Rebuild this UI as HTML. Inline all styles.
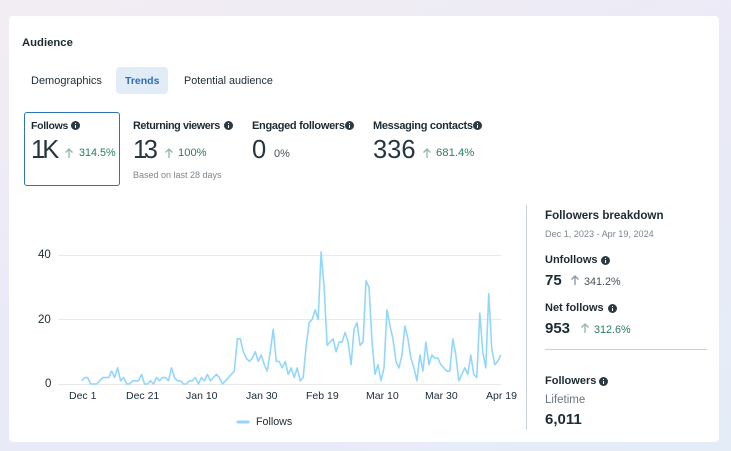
<!DOCTYPE html>
<html lang="en">
<head>
<meta charset="utf-8">
<title>Audience</title>
<style>
html,body{margin:0;padding:0}
body{width:731px;height:451px;overflow:hidden;position:relative;background:linear-gradient(160deg,#f3edf3 0%,#eaeaf6 45%,#e4ecf8 100%);font-family:"Liberation Sans",sans-serif;color:#1c2b33}
#card{position:absolute;left:9px;top:16px;width:710px;height:426px;background:#fff;border-radius:4px}
.t{position:absolute;white-space:nowrap;line-height:1}
.b{font-weight:700}
.h{font-size:11px;letter-spacing:-.3px;font-weight:700}
.n{font-size:25.5px;color:#263640}
.x{font-size:10.5px}
.i{position:absolute;width:9px;height:9px;border-radius:50%;background:#2b3a44}
.i:before{content:"";position:absolute;left:4px;top:4px;width:1.4px;height:3.4px;background:#fff}
.i:after{content:"";position:absolute;left:4px;top:2px;width:1.4px;height:1.2px;background:#fff}
.g{color:#2a7a66}
svg{position:absolute}
</style>
</head>
<body>
<div id="card"></div>

<div class="t b" style="left:22px;top:38px;font-size:11.3px">Audience</div>

<div style="position:absolute;left:116px;top:67px;width:52px;height:27px;background:#e2ecf7;border-radius:4px"></div>
<div class="t" style="left:31px;top:76px;font-size:11px">Demographics</div>
<div class="t b" style="left:125px;top:76px;font-size:10.5px;color:#2f6cb8">Trends</div>
<div class="t" style="left:184px;top:76px;font-size:10.8px">Potential audience</div>

<div style="position:absolute;left:24px;top:112px;width:94px;height:72px;border:1.5px solid #2f74b9;border-radius:3px;box-sizing:content-box"></div>

<div class="t h" style="left:31px;top:121px;font-size:10.5px">Follows</div><span class="i" style="left:71px;top:121px"></span>
<div class="t n" style="left:31px;top:138px"><span style="letter-spacing:-3px">1</span>K</div>
<svg style="left:63px;top:147px" width="12" height="12" viewBox="0 0 12 12"><path d="M6 11V2M2.5 5.5L6 2l3.5 3.5" fill="none" stroke="#8fb5a9" stroke-width="1.3"/></svg>
<div class="t g" style="left:79px;top:148px;font-size:10.8px">314.5%</div>

<div class="t h" style="left:133px;top:121px;font-size:10.8px;letter-spacing:-.4px">Returning viewers</div><span class="i" style="left:224px;top:121px"></span>
<div class="t n" style="left:133px;top:138px"><span style="letter-spacing:-3.5px">1</span>3</div>
<svg style="left:163px;top:147px" width="12" height="12" viewBox="0 0 12 12"><path d="M6 11V2M2.5 5.5L6 2l3.5 3.5" fill="none" stroke="#8fb5a9" stroke-width="1.3"/></svg>
<div class="t g" style="left:178px;top:148px;font-size:11.2px">100%</div>
<div class="t" style="left:133px;top:171px;font-size:9px;color:#7b868d">Based on last 28 days</div>

<div class="t h" style="left:252px;top:121px">Engaged followers</div><span class="i" style="left:345px;top:121px"></span>
<div class="t n" style="left:252px;top:138px">0</div>
<div class="t" style="left:274px;top:149px;font-size:11px;color:#44525b">0%</div>

<div class="t h" style="left:373px;top:121px">Messaging contacts</div><span class="i" style="left:473px;top:121px"></span>
<div class="t n" style="left:373px;top:138px">336</div>
<svg style="left:421px;top:147px" width="12" height="12" viewBox="0 0 12 12"><path d="M6 11V2M2.5 5.5L6 2l3.5 3.5" fill="none" stroke="#8fb5a9" stroke-width="1.3"/></svg>
<div class="t g" style="left:436px;top:148px;font-size:11.3px">681.4%</div>

<svg style="left:0;top:0" width="731" height="451" viewBox="0 0 731 451">
<g stroke="#e9e9e9" stroke-width="1">
<line x1="58" x2="501" y1="255.5" y2="255.5"/>
<line x1="58" x2="501" y1="319.5" y2="319.5"/>
<line x1="58" x2="501" y1="384.5" y2="384.5"/>
</g>
<g transform="translate(81.7 384) scale(2.993 -3.225)">
<polyline fill="none" stroke="#93d6fd" stroke-width="1.6" stroke-linejoin="round" vector-effect="non-scaling-stroke" points="0,1 1,2 2,2 3,0 4,0 5,0 6,1 7,2 8,2 9,2 10,4 11,2 12,5 13,1 14,2 15,0 16,0 17,1 18,1 19,1 20,3 21,0 22,0 23,1 24,0 25,2 26,1 27,2 28,2 29,1 30,5 31,2 32,1 33,1 34,0 35,0 36,1 37,1 38,2 39,0 40,2 41,1 42,3 43,1 44,2 45,3 46,2 47,0 48,1 49,2 50,3 51,4 52,14 53,14 54,10 55,8 56,7 57,8 58,10 59,7 60,9 61,6 62,4 63,10 64,17 65,7 66,7 67,5 68,7 69,3 70,5 71,2 72,5 73,1 74,2 75,12 76,19 77,20 78,23 79,20 80,41 81,30 82,12 83,13 84,14 85,10 86,13 87,13 88,16 89,13 90,6 91,17 92,19 93,12 94,13 95,32 96,30 97,13 98,3 99,6 100,1 101,5 102,23 103,18 104,14 105,7 106,5 107,9 108,18 109,14 110,8 111,5 112,1 113,9 114,4 115,13 116,6 117,9 118,8 119,8 120,6 121,5 122,4 123,4 124,14 125,9 126,1 127,3 128,5 129,3 130,9 131,3 132,2 133,22 134,10 135,5 136,28 137,11 138,6 139,7 140,9"/>
</g>
<line x1="238" x2="248" y1="422" y2="422" stroke="#93d6fd" stroke-width="3" stroke-linecap="round"/>
<line x1="526.5" x2="526.5" y1="205" y2="430" stroke="#c9d0d6" stroke-width="1"/>
<line x1="545" x2="707" y1="349.5" y2="349.5" stroke="#c9d0d6" stroke-width="1"/>
</svg>

<div class="t" style="left:38px;top:250px;font-size:11.5px">40</div>
<div class="t" style="left:38px;top:315px;font-size:11.5px">20</div>
<div class="t" style="left:45px;top:379px;font-size:11.5px">0</div>

<div class="t x" style="left:69px;top:391px">Dec 1</div>
<div class="t x" style="left:126px;top:391px">Dec 21</div>
<div class="t x" style="left:186px;top:391px">Jan 10</div>
<div class="t x" style="left:246px;top:391px">Jan 30</div>
<div class="t x" style="left:306px;top:391px">Feb 19</div>
<div class="t x" style="left:366px;top:391px">Mar 10</div>
<div class="t x" style="left:425px;top:391px">Mar 30</div>
<div class="t x" style="left:486px;top:391px">Apr 19</div>

<div class="t" style="left:256px;top:417px;font-size:10.7px">Follows</div>

<div class="t b" style="left:545px;top:210px;font-size:11.6px">Followers breakdown</div>
<div class="t" style="left:545px;top:230px;font-size:9.1px;color:#7b868d">Dec 1, 2023 - Apr 19, 2024</div>

<div class="t b" style="left:545px;top:255px;font-size:11px">Unfollows</div><span class="i" style="left:601px;top:256px"></span>
<div class="t b" style="left:545px;top:273px;font-size:15px">75</div>
<svg style="left:569px;top:274px" width="12" height="12" viewBox="0 0 12 12"><path d="M6 11V2M2.5 5.5L6 2l3.5 3.5" fill="none" stroke="#87949b" stroke-width="1.3"/></svg>
<div class="t" style="left:584px;top:277px;font-size:10.8px;color:#44525b">341.2%</div>

<div class="t b" style="left:545px;top:303px;font-size:11px">Net follows</div><span class="i" style="left:608px;top:304px"></span>
<div class="t b" style="left:545px;top:321px;font-size:15px">953</div>
<svg style="left:579px;top:322px" width="12" height="12" viewBox="0 0 12 12"><path d="M6 11V2M2.5 5.5L6 2l3.5 3.5" fill="none" stroke="#8fb5a9" stroke-width="1.3"/></svg>
<div class="t g" style="left:594px;top:325px;font-size:10.8px">312.6%</div>

<div class="t b" style="left:545px;top:376px;font-size:11px">Followers</div><span class="i" style="left:599px;top:377px"></span>
<div class="t" style="left:545px;top:395px;font-size:11.5px;color:#6b7680">Lifetime</div>
<div class="t b" style="left:545px;top:412px;font-size:15px">6,011</div>
</body>
</html>
